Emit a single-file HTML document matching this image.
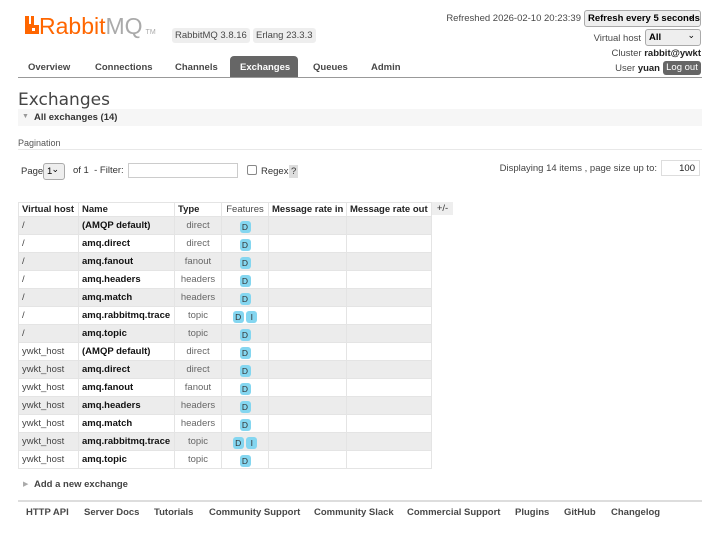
<!DOCTYPE html>
<html><head><meta charset="utf-8"><style>
*{box-sizing:border-box;margin:0;padding:0}
body{width:720px;height:540px;background:#fff;font-family:"Liberation Sans",Arial,sans-serif;font-size:9.5px;color:#444;position:relative;overflow:hidden}
.a{position:absolute;white-space:nowrap}
b{color:#222}
.badge{background:#eee;border-radius:3px;padding:2px 3px;color:#484848;font-size:9.5px}
.sel{border:1px solid #aaa;border-radius:3px;background:#eee;height:17px;padding:2px 3px;font-weight:bold;color:#000;font-size:9.5px;overflow:hidden}
.sel:after{content:"⌄";position:absolute;right:5px;top:0px;font-size:9px;font-weight:normal}
.nav span{position:absolute;top:62px;font-weight:bold;color:#484848;font-size:9.5px}
table{border-collapse:collapse;position:absolute;left:18px;top:202px;table-layout:fixed;width:413px}
td,th{border:1px solid #e4e4e4;height:18px;padding:0 3px;font-size:9.5px;white-space:nowrap;overflow:hidden}
th{height:14px;text-align:left;color:#222;background:#fff}
th.f{font-weight:normal;color:#484848;text-align:center}
tr.o td{background:#ececec}
td.t{text-align:center;color:#666}
td.n{font-weight:bold;color:#111}
td.fe{text-align:center}
.d{display:inline-block;background:#84d6f0;color:#333;border-radius:3px;width:11px;height:12px;line-height:12px;text-align:center;font-size:8.5px;margin-top:3px}
.foot span{position:absolute;top:507px;font-weight:bold;color:#484848;font-size:9.5px}
</style></head><body>
<svg class="a" style="left:25px;top:16px" width="14" height="18" viewBox="0 0 14 18"><path d="M0 0h4v8h2V0h3v9h5v9H0z M7 12v3h3v-3z" fill="#f60" fill-rule="evenodd"/></svg>
<div class="a" style="left:39px;top:13px;font-family:'Liberation Sans',sans-serif;font-size:23px;color:#f60">Rabbit<span style="color:#aaa">MQ</span><span style="font-size:7px;color:#aaa;margin-left:3px">TM</span></div>
<div class="a badge" style="left:172px;top:28px">RabbitMQ 3.8.16</div>
<div class="a badge" style="left:253px;top:28px">Erlang 23.3.3</div>

<div class="a" style="right:139px;top:13px;color:#484848">Refreshed 2026-02-10 20:23:39</div>
<div class="a sel" style="left:584px;top:10px;width:117px">Refresh every 5 seconds</div>
<div class="a" style="right:79px;top:33px;color:#484848">Virtual host</div>
<div class="a sel" style="left:645px;top:29px;width:56px">All</div>
<div class="a" style="right:19px;top:48px;color:#484848">Cluster <b>rabbit@ywkt</b></div>
<div class="a" style="right:60px;top:63px;color:#484848">User <b>yuan</b></div>
<div class="a" style="left:663px;top:61px;width:38px;height:14px;background:#666;color:#fff;border-radius:3px;text-align:center;line-height:14px">Log out</div>

<div class="nav">
<span style="left:28px">Overview</span>
<span style="left:95px">Connections</span>
<span style="left:175px">Channels</span>
<div class="a" style="left:230px;top:56px;width:68px;height:21px;background:#666;border-radius:4px 4px 0 0"></div>
<span style="left:240px;color:#fff">Exchanges</span>
<span style="left:313px">Queues</span>
<span style="left:371px">Admin</span>
</div>
<div class="a" style="left:18px;top:77px;width:684px;height:1px;background:#999"></div>

<div class="a" style="left:18px;top:90px;font-size:17px;color:#444;font-family:'DejaVu Sans',sans-serif">Exchanges</div>
<div class="a" style="left:18px;top:109px;width:684px;height:17px;background:#f6f6f6"></div>
<div class="a" style="left:22px;top:113px;font-size:7px;color:#999">▼</div>
<div class="a" style="left:34px;top:112px;font-weight:bold;color:#333">All exchanges (14)</div>
<div class="a" style="left:18px;top:138px;color:#555;font-size:9px">Pagination</div>
<div class="a" style="left:18px;top:149px;width:684px;height:1px;background:#e8e8e8"></div>

<div class="a" style="left:21px;top:166px;color:#333">Page</div>
<div class="a sel" style="left:43px;top:163px;width:22px;font-weight:normal">1</div>
<div class="a" style="left:73px;top:165px;color:#333">of 1 &nbsp;- Filter:</div>
<div class="a" style="left:128px;top:163px;width:110px;height:15px;border:1px solid #ccc"></div>
<div class="a" style="left:247px;top:165px;width:10px;height:10px;border:1px solid #888;border-radius:2px"></div>
<div class="a" style="left:261px;top:166px;color:#333">Regex</div>
<div class="a" style="left:289px;top:165px;background:#ddd;padding:1px 2px;color:#333">?</div>
<div class="a" style="right:63px;top:163px;color:#444">Displaying 14 items , page size up to:</div>
<div class="a" style="left:661px;top:160px;width:39px;height:16px;border:1px solid #ddd;text-align:right;padding:2px 4px;color:#222">100</div>

<table>
<colgroup><col style="width:60px"><col style="width:96px"><col style="width:47px"><col style="width:47px"><col style="width:78px"><col style="width:85px"></colgroup>
<tr><th>Virtual host</th><th>Name</th><th>Type</th><th class="f">Features</th><th>Message rate in</th><th>Message rate out</th></tr>
<tr class="o"><td>/</td><td class="n">(AMQP default)</td><td class="t">direct</td><td class="fe"><span class="d">D</span></td><td></td><td></td></tr>
<tr><td>/</td><td class="n">amq.direct</td><td class="t">direct</td><td class="fe"><span class="d">D</span></td><td></td><td></td></tr>
<tr class="o"><td>/</td><td class="n">amq.fanout</td><td class="t">fanout</td><td class="fe"><span class="d">D</span></td><td></td><td></td></tr>
<tr><td>/</td><td class="n">amq.headers</td><td class="t">headers</td><td class="fe"><span class="d">D</span></td><td></td><td></td></tr>
<tr class="o"><td>/</td><td class="n">amq.match</td><td class="t">headers</td><td class="fe"><span class="d">D</span></td><td></td><td></td></tr>
<tr><td>/</td><td class="n">amq.rabbitmq.trace</td><td class="t">topic</td><td class="fe"><span class="d">D</span> <span class="d">I</span></td><td></td><td></td></tr>
<tr class="o"><td>/</td><td class="n">amq.topic</td><td class="t">topic</td><td class="fe"><span class="d">D</span></td><td></td><td></td></tr>
<tr><td>ywkt_host</td><td class="n">(AMQP default)</td><td class="t">direct</td><td class="fe"><span class="d">D</span></td><td></td><td></td></tr>
<tr class="o"><td>ywkt_host</td><td class="n">amq.direct</td><td class="t">direct</td><td class="fe"><span class="d">D</span></td><td></td><td></td></tr>
<tr><td>ywkt_host</td><td class="n">amq.fanout</td><td class="t">fanout</td><td class="fe"><span class="d">D</span></td><td></td><td></td></tr>
<tr class="o"><td>ywkt_host</td><td class="n">amq.headers</td><td class="t">headers</td><td class="fe"><span class="d">D</span></td><td></td><td></td></tr>
<tr><td>ywkt_host</td><td class="n">amq.match</td><td class="t">headers</td><td class="fe"><span class="d">D</span></td><td></td><td></td></tr>
<tr class="o"><td>ywkt_host</td><td class="n">amq.rabbitmq.trace</td><td class="t">topic</td><td class="fe"><span class="d">D</span> <span class="d">I</span></td><td></td><td></td></tr>
<tr><td>ywkt_host</td><td class="n">amq.topic</td><td class="t">topic</td><td class="fe"><span class="d">D</span></td><td></td><td></td></tr>
</table>
<div class="a" style="left:432px;top:202px;width:21px;height:13px;background:#eee;text-align:center;color:#333;line-height:13px">+/-</div>

<div class="a" style="left:23px;top:480px;font-size:7px;color:#aaa">▶</div>
<div class="a" style="left:34px;top:479px;font-weight:bold;color:#444">Add a new exchange</div>
<div class="a" style="left:18px;top:500px;width:684px;height:2px;background:#ddd"></div>
<div class="foot">
<span style="left:26px">HTTP API</span>
<span style="left:84px">Server Docs</span>
<span style="left:154px">Tutorials</span>
<span style="left:209px">Community Support</span>
<span style="left:314px">Community Slack</span>
<span style="left:407px">Commercial Support</span>
<span style="left:515px">Plugins</span>
<span style="left:564px">GitHub</span>
<span style="left:611px">Changelog</span>
</div>
</body></html>
